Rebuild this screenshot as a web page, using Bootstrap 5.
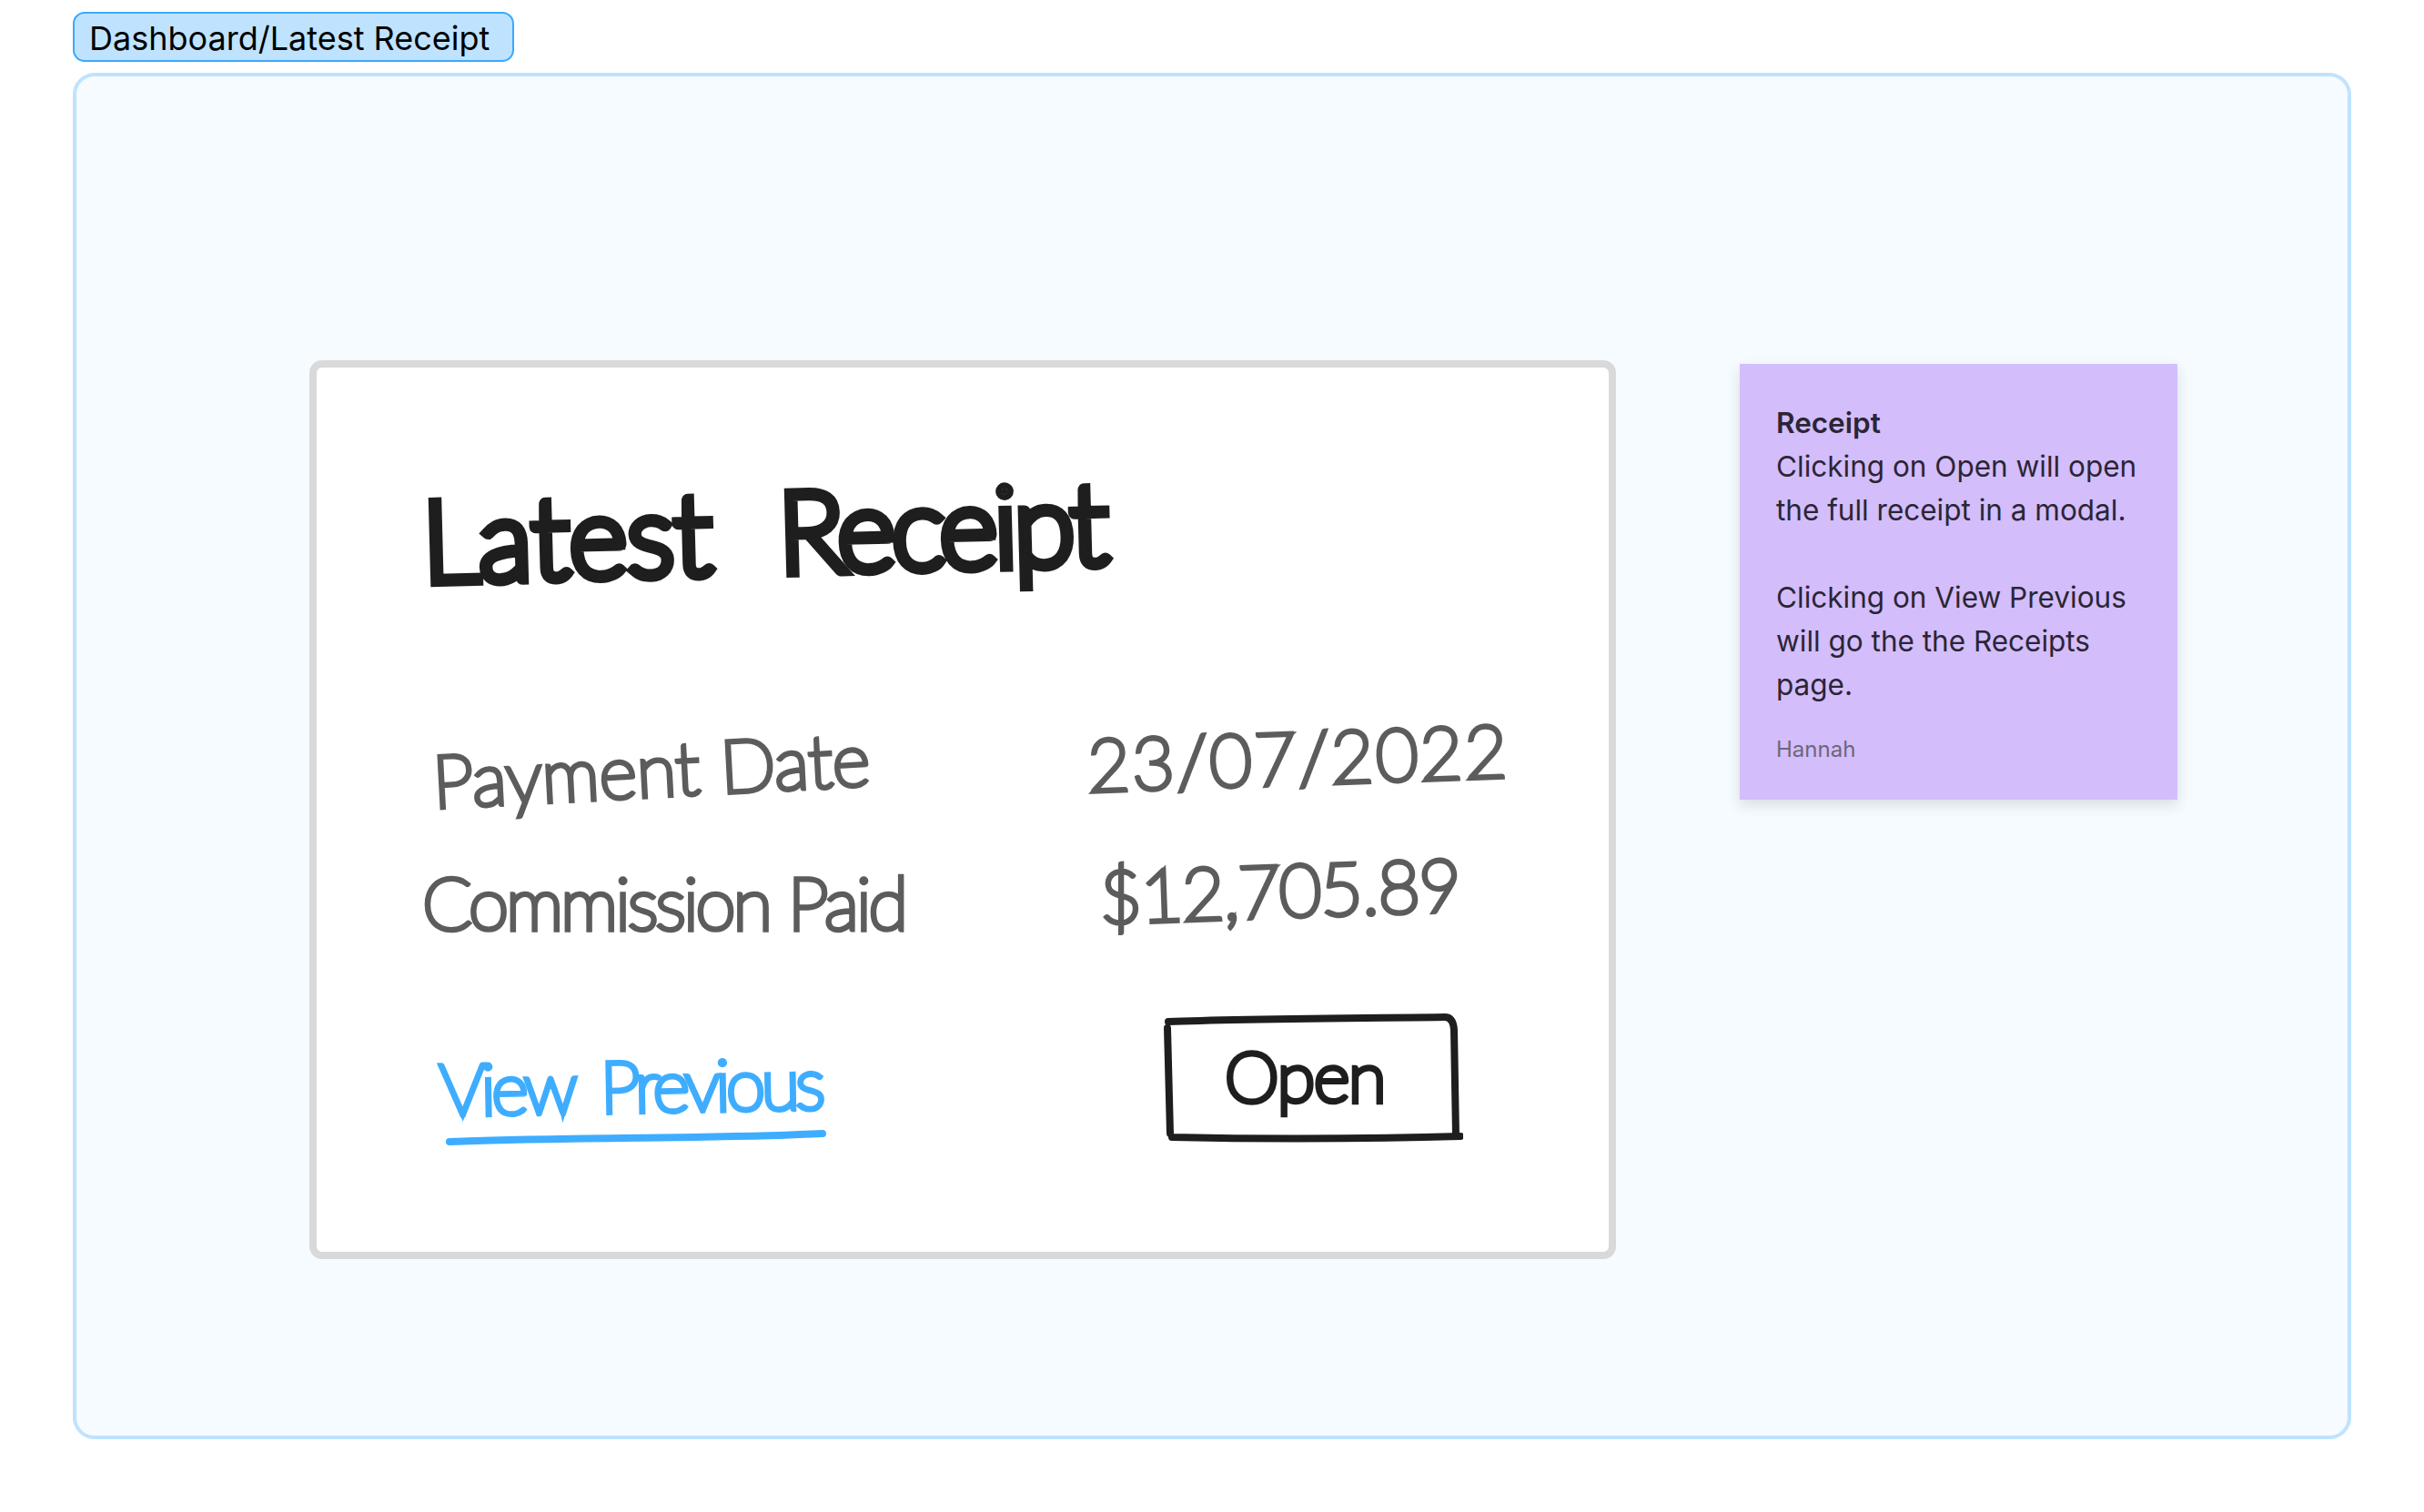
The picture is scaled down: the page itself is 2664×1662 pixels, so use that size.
<!doctype html>
<html lang="en">
<head>
<meta charset="utf-8">
<title>Dashboard/Latest Receipt</title>
<link href="https://cdn.jsdelivr.net/npm/bootstrap@5.3.0/dist/css/bootstrap.min.css" rel="stylesheet">
<style>
html,body{background:#fff;}
body{font-family:"Inter","Liberation Sans",sans-serif;color:#000;}
.board-page{padding:13px 80px 80px;width:2664px;height:1662px;}
.crumb-tag{height:55px;padding:0 25px 0 16px;background:#bfe3ff;border:2px solid #3aa9ff;border-radius:13px;font-size:36px;line-height:54px;}
.board-frame{margin-top:12px;height:1502px;background:#f5fbff;border:4px solid #bfe3ff;border-radius:24px;padding:312px 0 0 256px;gap:136px;}
.sketch-card{width:1436px;height:988px;background:#fff;border:8px solid #d9d9d9;border-radius:14px;padding:0;flex:none;}
.hand{display:block;white-space:nowrap;font-family:"Lato","Inter",sans-serif;font-weight:100;transform-origin:0 100%;}
.hand-title{margin:123px 0 0 118px;font-size:122px;line-height:130px;color:#1e1e1e;-webkit-text-stroke:13px #1e1e1e;word-spacing:38px;transform:rotate(-1.5deg);}
.word-a{letter-spacing:1px;}
.word-b{letter-spacing:-3.2px;}
.hand-row{display:flex;}
.hand-left{width:847px;flex:none;}
.hand-label,.hand-value{font-size:80px;line-height:96px;color:#5c5c5c;-webkit-text-stroke:5.5px #5c5c5c;}
.row-one{margin-top:134px;}
.row-two{margin-top:38px;}
.hand-label.l1{margin-left:130px;margin-top:18px;transform:rotate(-3deg);letter-spacing:0;}
.hand-value.v1{margin-left:2px;transform:rotate(-2deg);letter-spacing:2.5px;}
.hand-label.l2{margin-left:116px;letter-spacing:-3px;}
.hand-value.v2{margin-left:15px;margin-top:-7px;transform:rotate(-2deg);letter-spacing:-1px;}
.hand-actions{margin-top:115px;align-items:flex-start;}
.view-link{margin-left:136px;color:#3eadff;text-decoration:none;display:block;}
.view-link .hand{font-size:78px;line-height:84px;color:#3eadff;-webkit-text-stroke:6px #3eadff;transform:rotate(-1deg);letter-spacing:-4.5px;word-spacing:14px;}
.hand-rule{display:block;margin:2px 0 0 4px;}
.open-sketch{margin-left:81px;margin-top:-42px;width:332px;height:144px;position:relative;}
.open-sketch svg{position:absolute;left:0;top:0;}
.open-sketch .hand{font-size:76px;line-height:140px;color:#1e1e1e;-webkit-text-stroke:6.5px #1e1e1e;padding-left:70px;letter-spacing:-1px;}
.sticky-note{width:481px;height:479px;margin-top:4px;background:#d3bdfb;padding:41px 20px 0 40px;box-shadow:0 6px 14px rgba(40,40,60,.14);font-size:31.5px;line-height:48px;color:#2b2535;flex:none;}
.sticky-note p{margin:0;}
.note-head{font-weight:600;}
.note-gap{margin-top:48px!important;}
.note-by{margin-top:31px!important;font-size:24px;line-height:32px;color:#6d6679;}
</style>
</head>
<body>
<div class="board-page">
  <div class="crumb-tag d-inline-block">Dashboard/Latest Receipt</div>
  <div class="board-frame d-flex align-items-start">
    <section class="sketch-card">
      <h1 class="hand hand-title mb-0"><span class="word-a">Latest</span> <span class="word-b">Receipt</span></h1>
      <div class="hand-row row-one">
        <div class="hand-left"><span class="hand hand-label l1">Payment Date</span></div>
        <div><span class="hand hand-value v1">23/07/2022</span></div>
      </div>
      <div class="hand-row row-two">
        <div class="hand-left"><span class="hand hand-label l2">Commission Paid</span></div>
        <div><span class="hand hand-value v2">$12,705.89</span></div>
      </div>
      <div class="hand-row hand-actions">
        <div class="hand-left">
          <a href="#" class="view-link">
            <span class="hand">View Previous</span>
            <svg class="hand-rule" width="430" height="20" viewBox="0 0 430 20" aria-hidden="true"><path d="M6 15 C120 10 300 12 416 6" fill="none" stroke="#3eadff" stroke-width="8" stroke-linecap="round"/></svg>
          </a>
        </div>
        <div class="open-sketch">
          <svg width="332" height="144" viewBox="0 0 332 144" aria-hidden="true"><path d="M8 11 C80 8 240 7 312 6 Q321 6 322 20 L324 136 M329 137 C220 140 100 140 12 138 M10 134 L7 18" fill="none" stroke="#1e1e1e" stroke-width="8" stroke-linecap="round" stroke-linejoin="round"/></svg>
          <span class="hand">Open</span>
        </div>
      </div>
    </section>
    <aside class="sticky-note">
      <p class="note-head">Receipt</p>
      <p>Clicking on Open will open the full receipt in a modal.</p>
      <p class="note-gap">Clicking on View Previous will go the the Receipts page.</p>
      <p class="note-by">Hannah</p>
    </aside>
  </div>
</div>
<script src="https://cdn.jsdelivr.net/npm/bootstrap@5.3.0/dist/js/bootstrap.bundle.min.js"></script>
</body>
</html>
